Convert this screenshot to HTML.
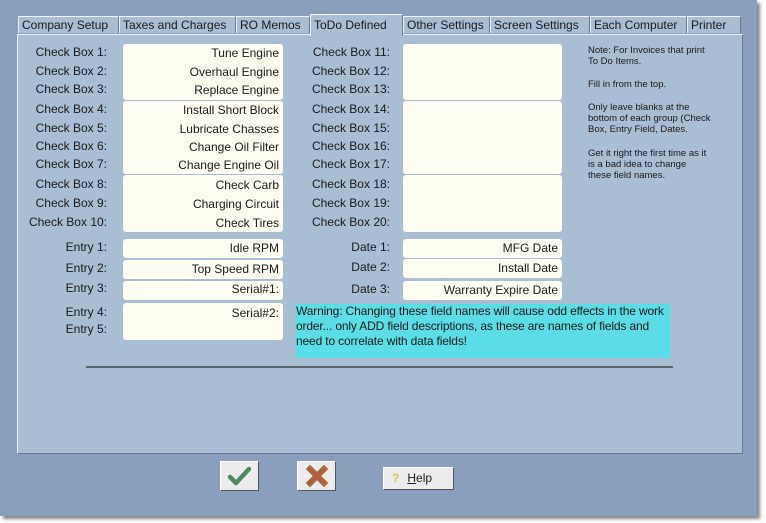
<!DOCTYPE html><html><head><style>
body{margin:0;width:766px;height:523px;background:#fff;position:relative;overflow:hidden;font-family:"Liberation Sans",sans-serif;font-size:12px;color:#1a1a1a}
.a{position:absolute}
.win{left:0;top:0;width:757px;height:516px;background:#8a9fbd;box-shadow:3px 3px 3px #888}
.panel{left:17px;top:34px;width:724px;height:418px;background:#a9bdd3;border:1px solid #eef2f8;border-right-color:#6b7a8c;border-bottom-color:#6b7a8c}
.tab{top:16px;height:17px;background:#a9bdd3;border:1px solid #eef2f8;border-bottom:none;border-right-color:#6b7a8c;line-height:17px;padding-left:3px;box-sizing:border-box;white-space:nowrap}
.lb{text-align:right;width:100px;line-height:16px}
.bx{background:#fefef2;border-radius:3px}
.tx{text-align:right;line-height:18px;padding-right:4px;box-sizing:border-box}
.nt{font-size:9.5px;line-height:11px;left:588px;width:124px}
.btn{background:#ececec;border:1px solid #fff;border-right-color:#555;border-bottom-color:#555;box-sizing:border-box}
</style></head><body>
<div class="a win"></div>
<div class="a tab" style="left:18px;width:101px">Company Setup</div>
<div class="a tab" style="left:119px;width:117px">Taxes and Charges</div>
<div class="a tab" style="left:236px;width:74px">RO Memos</div>
<div class="a tab" style="left:403px;width:87px">Other Settings</div>
<div class="a tab" style="left:490px;width:100px">Screen Settings</div>
<div class="a tab" style="left:590px;width:97px">Each Computer</div>
<div class="a tab" style="left:687px;width:54px">Printer</div>
<div class="a panel"></div>
<div class="a tab" style="left:310px;top:14px;height:22px;width:93px;padding-top:2px;z-index:2;border-bottom:none">ToDo Defined</div>

<div class="a lb" style="left:7px;top:44px">Check Box 1:</div>
<div class="a lb" style="left:7px;top:63px">Check Box 2:</div>
<div class="a lb" style="left:7px;top:81px">Check Box 3:</div>
<div class="a lb" style="left:7px;top:101px">Check Box 4:</div>
<div class="a lb" style="left:7px;top:120px">Check Box 5:</div>
<div class="a lb" style="left:7px;top:138px">Check Box 6:</div>
<div class="a lb" style="left:7px;top:156px">Check Box 7:</div>
<div class="a lb" style="left:7px;top:176px">Check Box 8:</div>
<div class="a lb" style="left:7px;top:195px">Check Box 9:</div>
<div class="a lb" style="left:7px;top:214px">Check Box 10:</div>
<div class="a lb" style="left:7px;top:239px">Entry 1:</div>
<div class="a lb" style="left:7px;top:260px">Entry 2:</div>
<div class="a lb" style="left:7px;top:280px">Entry 3:</div>
<div class="a lb" style="left:7px;top:304px">Entry 4:</div>
<div class="a lb" style="left:7px;top:321px">Entry 5:</div>

<div class="a bx" style="left:123px;top:44px;width:160px;height:56px"></div>
<div class="a bx" style="left:123px;top:101px;width:160px;height:73px"></div>
<div class="a bx" style="left:123px;top:175px;width:160px;height:57px"></div>
<div class="a bx" style="left:123px;top:239px;width:160px;height:19px"></div>
<div class="a bx" style="left:123px;top:260px;width:160px;height:19px"></div>
<div class="a bx" style="left:123px;top:281px;width:160px;height:19px"></div>
<div class="a bx" style="left:123px;top:303px;width:160px;height:37px"></div>
<div class="a tx" style="left:123px;top:44px;width:160px">Tune Engine</div>
<div class="a tx" style="left:123px;top:63px;width:160px">Overhaul Engine</div>
<div class="a tx" style="left:123px;top:81px;width:160px">Replace Engine</div>
<div class="a tx" style="left:123px;top:101px;width:160px">Install Short Block</div>
<div class="a tx" style="left:123px;top:120px;width:160px">Lubricate Chasses</div>
<div class="a tx" style="left:123px;top:138px;width:160px">Change Oil Filter</div>
<div class="a tx" style="left:123px;top:156px;width:160px">Change Engine Oil</div>
<div class="a tx" style="left:123px;top:176px;width:160px">Check Carb</div>
<div class="a tx" style="left:123px;top:195px;width:160px">Charging Circuit</div>
<div class="a tx" style="left:123px;top:214px;width:160px">Check Tires</div>
<div class="a tx" style="left:123px;top:239px;width:160px">Idle RPM</div>
<div class="a tx" style="left:123px;top:260px;width:160px">Top Speed RPM</div>
<div class="a tx" style="left:123px;top:280px;width:160px">Serial#1:</div>
<div class="a tx" style="left:123px;top:304px;width:160px">Serial#2:</div>

<div class="a lb" style="left:290px;top:44px">Check Box 11:</div>
<div class="a lb" style="left:290px;top:63px">Check Box 12:</div>
<div class="a lb" style="left:290px;top:81px">Check Box 13:</div>
<div class="a lb" style="left:290px;top:101px">Check Box 14:</div>
<div class="a lb" style="left:290px;top:120px">Check Box 15:</div>
<div class="a lb" style="left:290px;top:138px">Check Box 16:</div>
<div class="a lb" style="left:290px;top:156px">Check Box 17:</div>
<div class="a lb" style="left:290px;top:176px">Check Box 18:</div>
<div class="a lb" style="left:290px;top:195px">Check Box 19:</div>
<div class="a lb" style="left:290px;top:214px">Check Box 20:</div>
<div class="a lb" style="left:290px;top:239px">Date 1:</div>
<div class="a lb" style="left:290px;top:259px">Date 2:</div>
<div class="a lb" style="left:290px;top:281px">Date 3:</div>
<div class="a bx" style="left:403px;top:44px;width:159px;height:56px"></div>
<div class="a bx" style="left:403px;top:101px;width:159px;height:73px"></div>
<div class="a bx" style="left:403px;top:175px;width:159px;height:57px"></div>
<div class="a bx" style="left:403px;top:239px;width:159px;height:19px"></div>
<div class="a bx" style="left:403px;top:259px;width:159px;height:19px"></div>
<div class="a bx" style="left:403px;top:281px;width:159px;height:19px"></div>
<div class="a tx" style="left:403px;top:239px;width:159px">MFG Date</div>
<div class="a tx" style="left:403px;top:259px;width:159px">Install Date</div>
<div class="a tx" style="left:403px;top:281px;width:159px">Warranty Expire Date</div>

<div class="a nt" style="top:45px">Note: For Invoices that print<br>To Do Items.</div>
<div class="a nt" style="top:79px">Fill in from the top.</div>
<div class="a nt" style="top:102px">Only leave blanks at the<br>bottom of each group (Check<br>Box, Entry Field, Dates.</div>
<div class="a nt" style="top:148px">Get it right the first time as it<br>is a bad idea to change<br>these field names.</div>

<div class="a" style="left:295px;top:304px;width:375px;height:54px;background:#5bdde7;padding-left:1px;line-height:15px;box-sizing:border-box;font-size:12px;letter-spacing:-0.15px;white-space:nowrap;overflow:hidden">Warning: Changing these field names will cause odd effects in the work<br>order... only ADD field descriptions, as these are names of fields and<br>need to correlate with data fields!</div>
<div class="a" style="left:86px;top:366px;width:587px;height:2px;background:#5a6470"></div>

<div class="a btn" style="left:220px;top:461px;width:39px;height:30px"><svg width="37" height="28"><path d="M9 15 L15 21 L28 7" fill="none" stroke="#4e8a5e" stroke-width="4.5" stroke-linecap="round" stroke-linejoin="round"/></svg></div>
<div class="a btn" style="left:297px;top:461px;width:39px;height:30px"><svg width="37" height="28"><path d="M12 7 L26 21 M26 7 L12 21" stroke="#b0603a" stroke-width="6" stroke-linecap="square"/></svg></div>
<div class="a btn" style="left:383px;top:467px;width:71px;height:23px;line-height:21px"><span style="color:#e0b860;font-weight:bold;margin-left:8px">?</span><span style="margin-left:8px"><u>H</u>elp</span></div>
</body></html>
